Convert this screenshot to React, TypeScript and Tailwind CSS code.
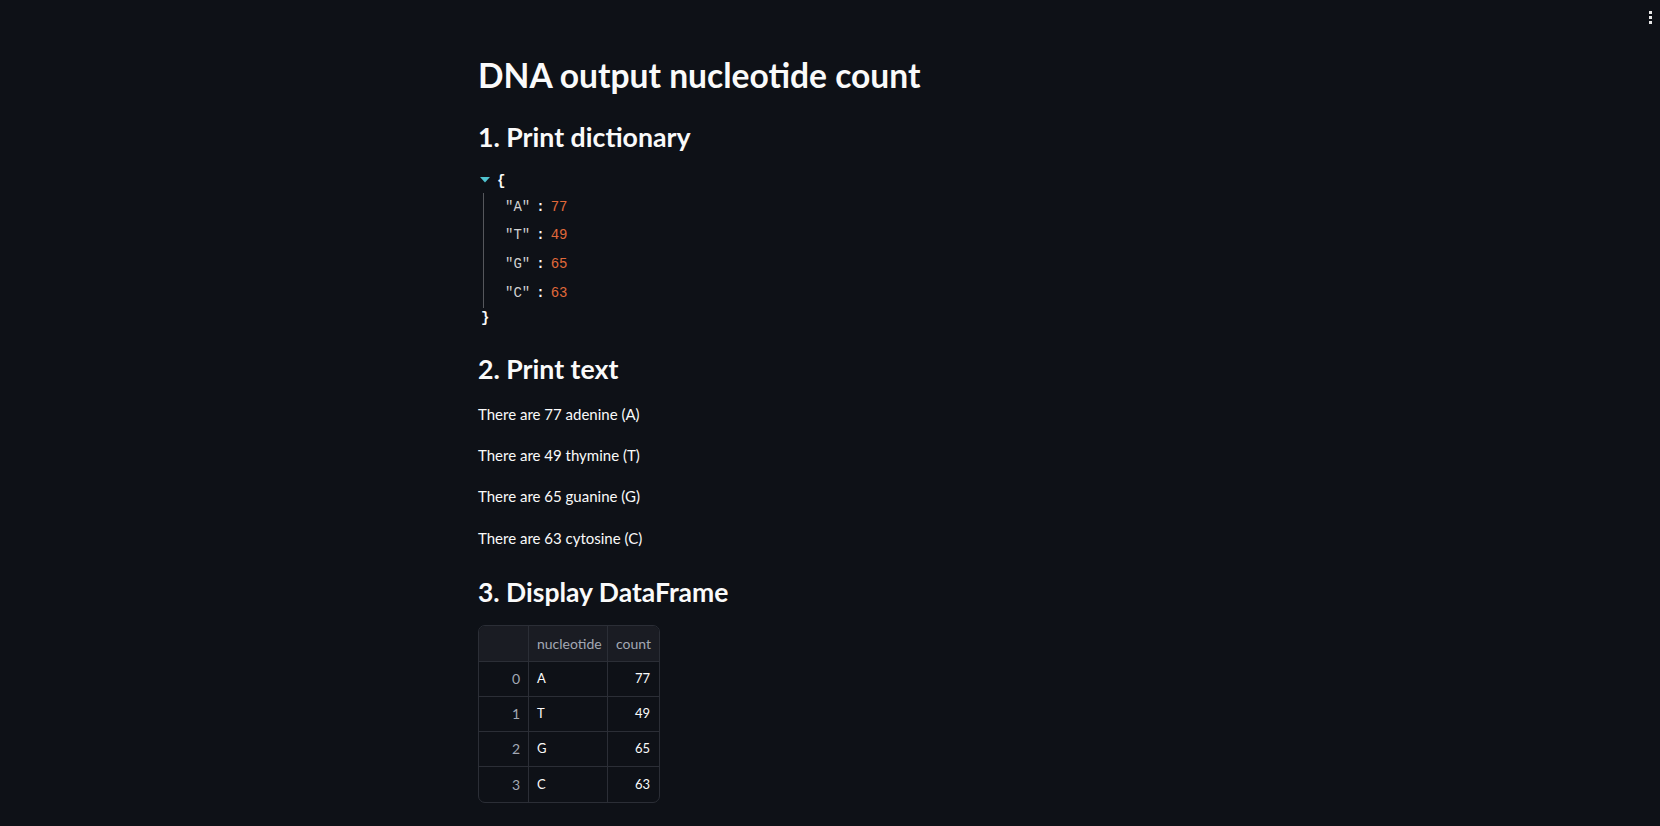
import React from "react";

const rows = [
  { i: 0, n: "A", c: 77 },
  { i: 1, n: "T", c: 49 },
  { i: 2, n: "G", c: 65 },
  { i: 3, n: "C", c: 63 },
];

export default function App() {
  const sans = { fontFamily: "Lato, 'Noto Sans', sans-serif" } as React.CSSProperties;
  return (
    <div className="relative min-h-[826px] w-full bg-[#0e1117] text-[#fafafa]" style={sans}>
      <div className="absolute right-[8px] top-[11px] flex flex-col gap-[2px]">
        <span className="block h-[3px] w-[3px] bg-[#e6e6e6]" />
        <span className="block h-[3px] w-[3px] bg-[#e6e6e6]" />
        <span className="block h-[3px] w-[3px] bg-[#e6e6e6]" />
      </div>
      <div className="mx-auto w-[736px] px-4 pt-[55px] pb-[20px]">
        <h1 className="h-[40px] text-[33.6px] font-bold leading-[40px]">DNA output nucleotide count</h1>
        <h2 className="mt-[24px] h-[36px] text-[26.7px] font-bold leading-[36px]">1. Print dictionary</h2>
        <div className="mt-[15px] font-['Liberation_Mono',monospace] text-[14px]">
          <div className="flex h-[23px] items-center">
            <svg width="10" height="6" viewBox="0 0 10 6" className="ml-[2px] mr-[7px] -mt-[4px]">
              <path d="M0 0 L10 0 L5 5.5 Z" fill="#4fc3cf" />
            </svg>
            <span className="font-bold text-[#fafafa]">{"{"}</span>
          </div>
          <div className="ml-[5px] border-l border-[#55575c] pl-[21px]">
            {rows.map((r) => (
              <div key={r.n} className="flex h-[28.67px] items-center">
                <span className="text-[#d0d0d0]">"{r.n}"</span>
                <span className="mx-[6px] font-bold text-[#fafafa]">:</span>
                <span className="text-[#e0693a]">{r.c}</span>
              </div>
            ))}
          </div>
          <div className="flex h-[21px] items-center pl-[3px] font-bold">{"}"}</div>
        </div>
        <h2 className="mt-[22px] h-[36px] text-[26.7px] font-bold leading-[36px]">2. Print text</h2>
        <div className="mt-[7px] text-[15px]">
          <p className="leading-[41.33px]">There are 77 adenine (A)</p>
          <p className="leading-[41.33px]">There are 49 thymine (T)</p>
          <p className="leading-[41.33px]">There are 65 guanine (G)</p>
          <p className="leading-[41.33px]">There are 63 cytosine (C)</p>
        </div>
        <h2 className="mt-[15px] h-[36px] text-[26.5px] font-bold leading-[36px]">3. Display DataFrame</h2>
        <div className="mt-[15px] w-[182px] overflow-hidden rounded-[7px] border border-[#2b2e36] text-[14px]">
          <div className="flex h-[36px] border-b border-[#2b2e36] bg-[#1a1c23] text-[#a3a8b4]">
            <div className="w-[50px] border-r border-[#2b2e36]" />
            <div className="flex w-[79px] items-center border-r border-[#2b2e36] px-[8px]">nucleotide</div>
            <div className="flex flex-1 items-center justify-end px-[8px]">count</div>
          </div>
          {rows.map((r, idx) => (
            <div
              key={r.i}
              className={
                "flex h-[35px] " + (idx < rows.length - 1 ? "border-b border-[#2b2e36]" : "")
              }
            >
              <div className="flex w-[50px] items-center justify-end border-r border-[#2b2e36] px-[8px] text-[#a3a8b4]">
                {r.i}
              </div>
              <div className="flex w-[79px] items-center border-r border-[#2b2e36] px-[8px] text-[13px]">{r.n}</div>
              <div className="flex flex-1 items-center justify-end px-[9px] text-[13px]">{r.c}</div>
            </div>
          ))}
        </div>
      </div>
    </div>
  );
}
